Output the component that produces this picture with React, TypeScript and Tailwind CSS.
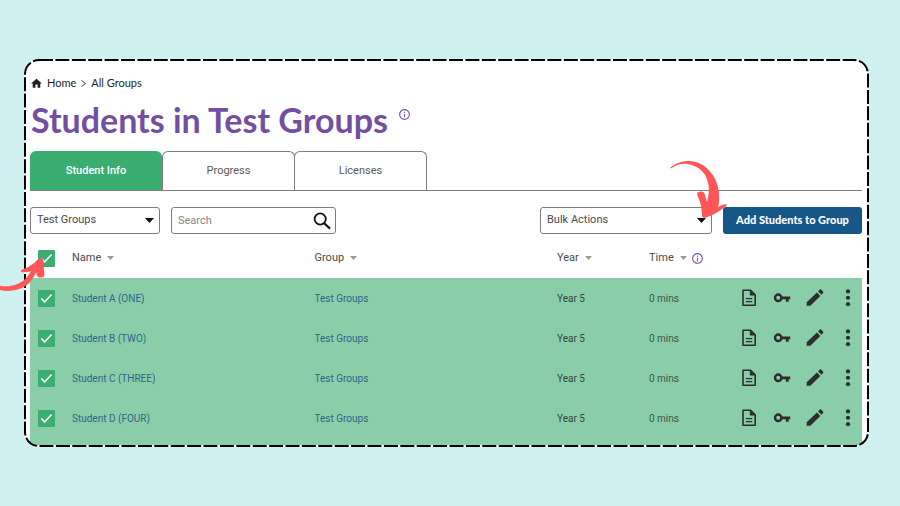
import { useState } from "react";
import type { ReactNode } from "react";
import { MdHome, MdInfoOutline } from "react-icons/md";

const students = [
  { id: "a", name: "Student A (ONE)", group: "Test Groups", year: "Year 5", time: "0 mins" },
  { id: "b", name: "Student B (TWO)", group: "Test Groups", year: "Year 5", time: "0 mins" },
  { id: "c", name: "Student C (THREE)", group: "Test Groups", year: "Year 5", time: "0 mins" },
  { id: "d", name: "Student D (FOUR)", group: "Test Groups", year: "Year 5", time: "0 mins" },
];

const tabs = ["Student Info", "Progress", "Licenses"];

const field =
  "block h-[27px] w-full appearance-none rounded-[3px] border border-[#7d7d7d] bg-white pl-1.5 text-[11px] text-[#4a4a4a] outline-none";

function Checkbox({
  label,
  checked,
  onChange,
}: {
  label: string;
  checked: boolean;
  onChange: () => void;
}) {
  return (
    <label className="grid size-[17px] cursor-pointer">
      <input
        type="checkbox"
        aria-label={label}
        checked={checked}
        onChange={onChange}
        className="col-start-1 row-start-1 size-[17px] appearance-none rounded-[1px] border border-[#3aae70] bg-white checked:bg-[#3aae70]"
      />
      {checked ? (
        <svg viewBox="0 0 17 17" className="pointer-events-none col-start-1 row-start-1 size-[17px]" fill="none">
          <path d="M3.2 8.4 6.6 11.8 13.6 4.4" stroke="#fff" strokeWidth="1.5" />
        </svg>
      ) : null}
    </label>
  );
}

function SelectBox({ label, children }: { label: string; children: ReactNode }) {
  return (
    <>
      <select aria-label={label} className={field}>
        {children}
      </select>
      <svg viewBox="0 0 9 5" className="pointer-events-none absolute top-[11px] right-1.5 h-[5px] w-[9px]">
        <path d="M0 0h9L4.5 5z" fill="#111" />
      </svg>
    </>
  );
}

function SortHeader({ children, info }: { children: ReactNode; info?: boolean }) {
  return (
    <th scope="col" className="p-0 pt-1 text-left font-normal">
      <div className="flex items-center">
        <button type="button" className="flex items-center gap-1.5">
          {children}
          <svg viewBox="0 0 7 4" className="h-1 w-[7px]">
            <path d="M0 0h7L3.5 4z" fill="#9a9a9a" />
          </svg>
        </button>
        {info ? <MdInfoOutline size={13} className="ml-1 text-[#7d55b5]" /> : null}
      </div>
    </th>
  );
}

function DocumentIcon() {
  return (
    <svg viewBox="0 0 20 20" className="size-5" fill="none" stroke="#2d2d2d">
      <path d="M4 2.2h7.6l4.6 4.6v10.4H4z" strokeWidth="1.6" strokeLinejoin="round" />
      <path d="M10.8 2v5.6h5.4z" fill="#2d2d2d" stroke="none" />
      <path d="M6.8 10.6h6.4M6.8 13.6h6.4" strokeWidth="1.3" />
    </svg>
  );
}

function KeyIcon() {
  return (
    <svg viewBox="0 0 20 20" className="size-5" fill="none" stroke="#2d2d2d">
      <circle cx="6.2" cy="9.8" r="3.2" strokeWidth="2.5" />
      <path d="M9.5 9.8h8.7M15.2 9.8v4" strokeWidth="2.8" />
    </svg>
  );
}

function PencilIcon() {
  return (
    <svg viewBox="0 0 20 20" className="size-5" fill="#2d2d2d">
      <path d="M1.7 17.8v-3.6L11.9 4.4l3.5 3.5L5.3 17.8z" />
      <path d="m13 3.3 1.7-1.6c.5-.5 1.1-.5 1.6 0L18 3.4c.5.5.5 1.1 0 1.6l-1.6 1.8z" />
    </svg>
  );
}

function MoreIcon() {
  return (
    <svg viewBox="0 0 20 20" className="size-5" fill="#2d2d2d">
      <circle cx="10" cy="3.4" r="2.1" />
      <circle cx="10" cy="9.8" r="2.1" />
      <circle cx="10" cy="16.2" r="2.1" />
    </svg>
  );
}

export default function App() {
  const [activeTab, setActiveTab] = useState("Student Info");
  const [selected, setSelected] = useState(students.map((s) => s.id));
  const allSelected = selected.length === students.length;

  const toggle = (id: string) =>
    setSelected((prev) => (prev.includes(id) ? prev.filter((x) => x !== id) : [...prev, id]));

  return (
    <main className="min-h-screen overflow-hidden bg-[#cff0f1] pt-[59px] pr-[31px] pb-[60px] pl-6 font-['Roboto',sans-serif] text-[#4a4a4a]">
      <div className="relative">
        <div className="overflow-hidden rounded-[14px] bg-white pt-4 pr-[7px] pb-0.5 pl-1.5">
          <nav
            aria-label="Breadcrumb"
            className="flex h-4 items-center font-['Lato',sans-serif] text-[11px] text-[#222]"
          >
            <MdHome size={13} className="mr-1 text-[#222]" />
            <a href="#home">Home</a>
            <svg viewBox="0 0 5 7" className="mx-[5px] h-[7px] w-[5px]" fill="none" stroke="#333">
              <path d="m.5.5 4 3-4 3" />
            </svg>
            <a href="#groups">All Groups</a>
          </nav>

          <div className="mt-[9px] flex h-10 items-start gap-2.5 pl-px">
            <h1 className="font-['Lato',sans-serif] text-[34px] leading-10 font-bold whitespace-nowrap text-[#724fa1]">
              Students in Test Groups
            </h1>
            <MdInfoOutline size={13} className="mt-2 text-[#7d55b5]" />
          </div>

          <div role="tablist" className="mt-[11px] flex border-b border-[#7d7d7d]">
            {tabs.map((tab) => (
              <button
                key={tab}
                type="button"
                role="tab"
                aria-selected={tab === activeTab}
                onClick={() => setActiveTab(tab)}
                className={
                  tab === activeTab
                    ? "h-[39px] w-[132px] rounded-t-md border border-b-0 border-[#3aae70] bg-[#3aae70] text-[11px] font-medium text-white"
                    : "-mr-px h-[39px] w-[133px] rounded-t-md border border-b-0 border-[#7d7d7d] text-[11px] text-[#5a5a5a]"
                }
              >
                {tab}
              </button>
            ))}
          </div>

          <div className="mt-4 flex gap-[11px]">
            <div className="relative w-[130px]">
              <SelectBox label="Group">
                <option>Test Groups</option>
              </SelectBox>
            </div>
            <div className="relative w-[165px]">
              <input type="search" aria-label="Search" placeholder="Search" className={`${field} placeholder:text-[#858585]`} />
              <svg viewBox="0 0 18 18" className="pointer-events-none absolute top-[5px] right-[5px] size-[18px]" fill="none" stroke="#111">
                <circle cx="7.2" cy="7" r="5.6" strokeWidth="1.8" />
                <path d="m11.2 11.2 5.8 5.4" strokeWidth="2.2" />
              </svg>
            </div>
            <div className="relative ml-auto w-[172px]">
              <SelectBox label="Bulk actions">
                <option>Bulk Actions</option>
              </SelectBox>
              <svg
                viewBox="0 0 240 210"
                className="pointer-events-none absolute -top-[52px] -right-7 z-10 h-[70px] w-20"
                fill="#ff5757"
              >
                <path d="M31 38C48 23 78 14 105 20 140 28 166 62 174 96c5 22 4 42 1 61 6-5 14-9 23-9 3 1 3 3 1 5-10 8-18 13-26 18-13 8-24 13-37 17-7 1-10-1-10-7 0-26-7-44-14-61-2-6 0-9 6-10 10-2 14 0 16 7 3 8 4 16 7 24 7-24 8-48-1-71C131 46 110 31 82 27 62 25 46 31 34 40c-3 1-4 0-3-2z" />
              </svg>
            </div>
            <button
              type="button"
              className="h-[27px] w-[139px] rounded-[3px] bg-[#165788] font-['Lato',sans-serif] text-[11px] font-black whitespace-nowrap text-white"
            >
              Add Students to Group
            </button>
          </div>

          <table className="w-full table-fixed border-collapse text-[10px]">
            <colgroup>
              <col className="w-[42px]" />
              <col />
              <col />
              <col className="w-[92px]" />
              <col className="w-[84px]" />
              <col className="w-[129px]" />
            </colgroup>
            <thead>
              <tr className="h-11 text-[11px]">
                <th scope="col" className="p-0 pt-1 pl-2">
                  <Checkbox
                    label="Select all students"
                    checked={allSelected}
                    onChange={() => setSelected(allSelected ? [] : students.map((s) => s.id))}
                  />
                </th>
                <SortHeader>Name</SortHeader>
                <SortHeader>Group</SortHeader>
                <SortHeader>Year</SortHeader>
                <SortHeader info>Time</SortHeader>
                <td />
              </tr>
            </thead>
            <tbody className="bg-[#8acea9]">
              {students.map((s) => (
                <tr key={s.id} className="h-10">
                  <td className="p-0 pl-2">
                    <Checkbox label={`Select ${s.name}`} checked={selected.includes(s.id)} onChange={() => toggle(s.id)} />
                  </td>
                  <td className="p-0 text-[#2c6787]">
                    <a href={`#${s.id}`}>{s.name}</a>
                  </td>
                  <td className="p-0 text-[#2c6787]">
                    <a href="#groups">{s.group}</a>
                  </td>
                  <td className="p-0 text-[#2b4a3b]">{s.year}</td>
                  <td className="p-0 text-[#35584a]">{s.time}</td>
                  <td className="p-0 pr-1">
                    <div className="flex justify-end gap-[13px]">
                      <button type="button" aria-label="Report">
                        <DocumentIcon />
                      </button>
                      <button type="button" aria-label="Password">
                        <KeyIcon />
                      </button>
                      <button type="button" aria-label="Edit">
                        <PencilIcon />
                      </button>
                      <button type="button" aria-label="More">
                        <MoreIcon />
                      </button>
                    </div>
                  </td>
                </tr>
              ))}
            </tbody>
          </table>
          <div className="h-[7px] bg-[#8acea9]" />
        </div>

        {/* dashed frame */}
        <svg className="pointer-events-none absolute inset-0 size-full" fill="none" stroke="#000">
          <rect
            x="1"
            y="1"
            rx="14"
            className="h-[calc(100%-2px)] w-[calc(100%-2px)]"
            strokeWidth="2"
            strokeDasharray="14 2.4"
          />
        </svg>

        {/* pointer to the select-all box */}
        <svg
          viewBox="0 0 210 180"
          className="pointer-events-none absolute top-[186px] -left-6 h-[60px] w-[70px]"
          fill="#ff5757"
        >
          <path d="M0 122c28 5 54-2 73-18 8-7 14-15 20-26-8 3-16 4-24 4-7-1-9-5-4-8 20-6 34-15 46-28 6-5 15-9 18-3 2 16 4 33 4 49 0 6-19 8-21 1l-4-11c-8 19-18 33-33 42-22 14-51 17-75 11z" />
        </svg>
      </div>
    </main>
  );
}
